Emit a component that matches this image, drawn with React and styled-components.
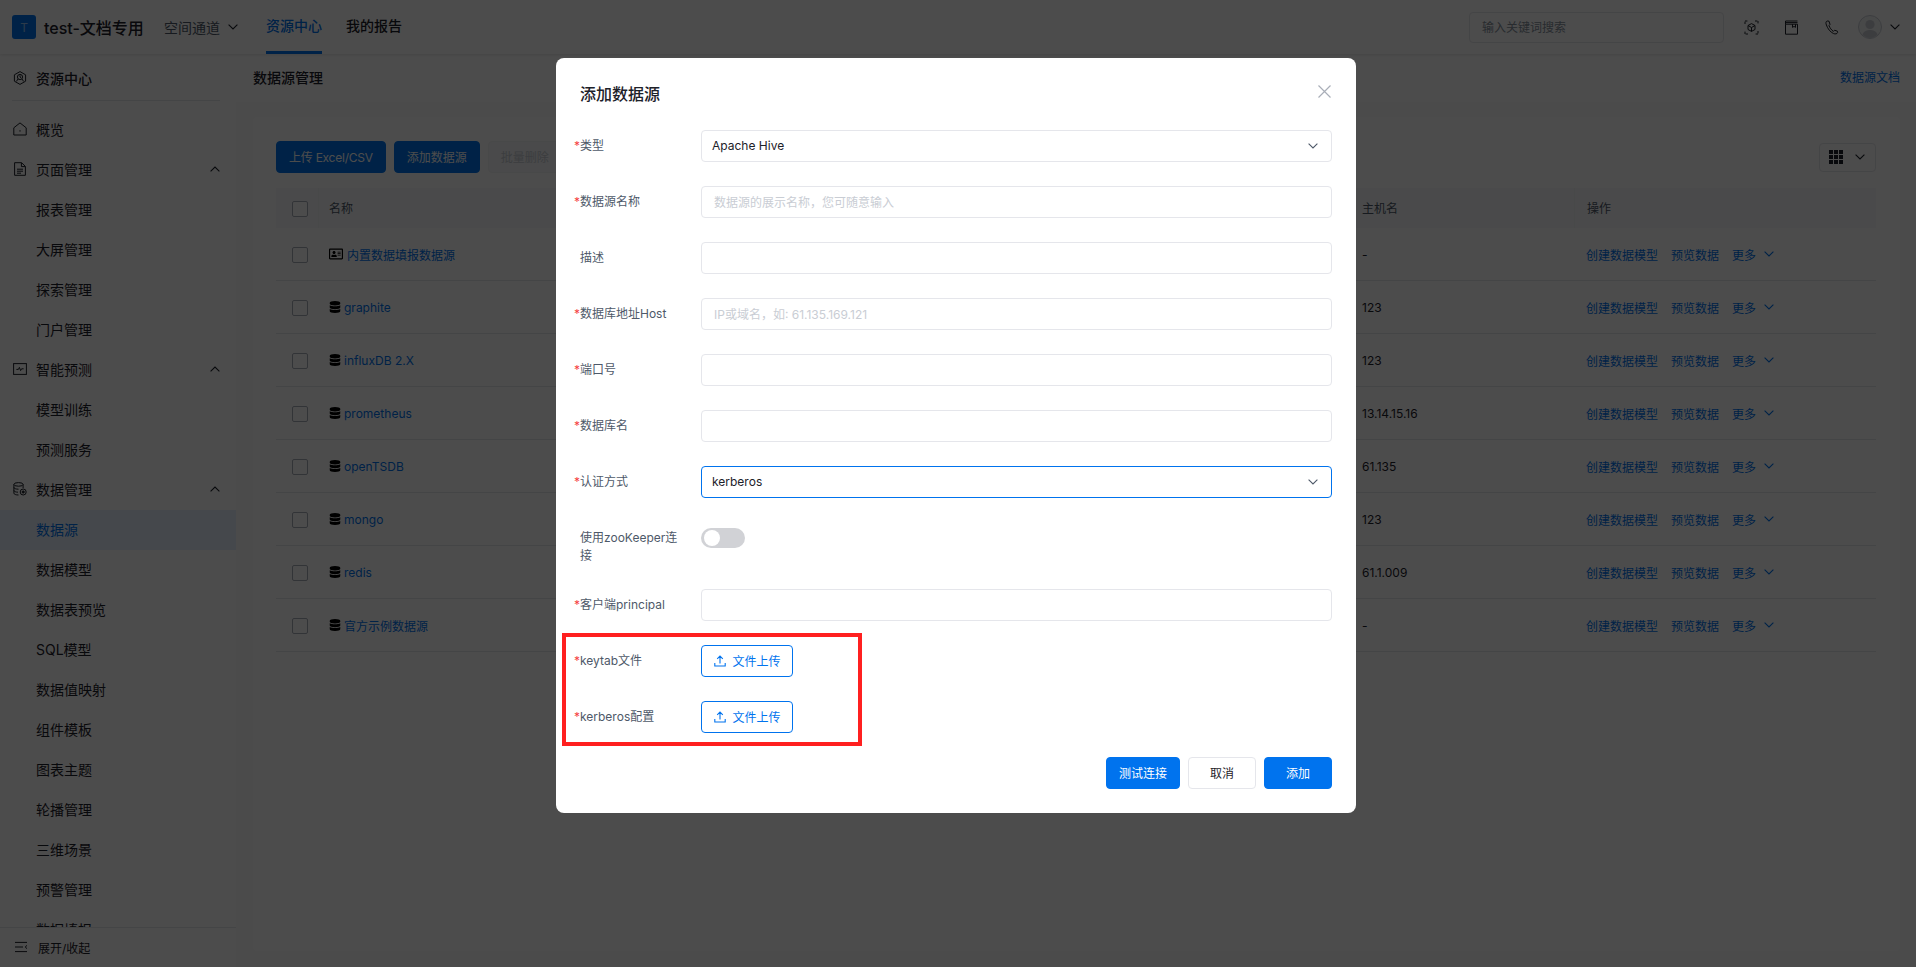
import React from 'react'
import styled, { createGlobalStyle } from 'styled-components'
import { FaDatabase, FaRegAddressCard } from 'react-icons/fa'

const GlobalStyle = createGlobalStyle`
html, body { margin: 0; height: 100%; }
body { font-family: Inter, "Noto Sans CJK SC", sans-serif; font-size: 12px; color: #1d2129; background: #fff; }
* { box-sizing: border-box; }
`

const Page = styled.div`
height: 100vh;
overflow: hidden;
display: flex;
flex-direction: column;
`

const TopBar = styled.header`
height: 54px;
flex: none;
display: flex;
align-items: center;
padding: 0 16px 0 12px;
background: #fff;
box-shadow: 0 1px 3px rgba(0,0,0,.1);
position: relative;
z-index: 1;
`
const LogoMark = styled.div`
width: 24px;
height: 24px;
border-radius: 3px;
background: #0073ee;
color: rgba(255,255,255,.6);
font-size: 12px;
display: flex;
align-items: center;
justify-content: center;
margin-right: 8px;
`
const Brand = styled.div`
font-size: 16px;
font-weight: 500;
width: 120px;
white-space: nowrap;
`
const Space = styled.div`
font-size: 14px;
color: #4e5969;
display: flex;
align-items: center;
gap: 8px;
width: 102px;
`
const Tab = styled.div`
height: 54px;
line-height: 52px;
font-size: 14px;
font-weight: 500;
margin-right: 24px;
color: ${({ $active }) => ($active ? '#0073ee' : '#1d2129')};
border-bottom: 3px solid ${({ $active }) => ($active ? '#0073ee' : 'transparent')};
`
const TopRight = styled.div`
margin-left: auto;
display: flex;
align-items: center;
`
const Search = styled.div`
width: 255px;
height: 31px;
border: 1px solid #e5e6eb;
border-radius: 4px;
padding: 0 12px;
line-height: 29px;
color: #86909c;
margin-right: 20px;
`
const TopIcon = styled.svg`
width: 15px;
height: 15px;
margin-right: ${({ $gap }) => $gap || 25}px;
fill: none;
stroke: #1d2129;
stroke-width: 1;
`
const Avatar = styled.svg`
width: 24px;
height: 24px;
margin-right: 8px;
`

const Body = styled.div`
flex: 1;
display: flex;
min-height: 0;
`
const Sidebar = styled.aside`
width: 236px;
flex: none;
display: flex;
flex-direction: column;
background: #fff;
box-shadow: 1px 0 2px rgba(0,0,0,.03);
`
const SideList = styled.nav`
flex: 1;
min-height: 0;
overflow: hidden;
`
const SideHead = styled.div`
height: 43px;
margin: 4px 16px 9px 12px;
border-bottom: 1px solid #e5e6eb;
display: flex;
align-items: center;
gap: 9px;
padding: 0 0 3px 1px;
font-size: 14px;
font-weight: 500;
color: #1d2129;
`
const SideItem = styled.div`
height: 40px;
display: flex;
align-items: center;
font-size: 14px;
gap: 9px;
padding: 0 16px 2px ${({ $sub }) => ($sub ? '36px' : '13px')};
color: ${({ $active }) => ($active ? '#0073ee' : '#1d2129')};
background: ${({ $active }) => ($active ? '#e8f2fd' : 'transparent')};
`
const SideIcon = styled.svg`
width: 14px;
height: 14px;
flex: none;
fill: none;
stroke: #1d2129;
stroke-width: 1;
`
const Caret = styled.svg`
width: ${({ $w }) => $w || 10}px;
height: ${({ $w }) => ($w ? $w * 0.6 : 6)}px;
flex: none;
fill: none;
stroke: ${({ $color }) => $color || '#1d2129'};
stroke-width: 1.1;
margin-left: ${({ $push }) => ($push ? 'auto' : 0)};
transform: ${({ $up }) => ($up ? 'rotate(180deg)' : 'none')};
`
const SideFoot = styled.div`
height: 40px;
flex: none;
border-top: 1px solid #e5e6eb;
display: flex;
align-items: center;
gap: 10px;
padding: 0 0 1px 14px;
font-size: 12px;
color: #1d2129;
`

const Main = styled.main`
flex: 1;
min-width: 0;
display: flex;
flex-direction: column;
background: #fafbfb;
`
const PageHead = styled.div`
height: 48px;
flex: none;
background: #fff;
display: flex;
align-items: center;
justify-content: space-between;
padding: 0 16px 3px 17px;
`
const PageTitle = styled.div`
font-size: 14px;
font-weight: 500;
`
const DocLink = styled.a`
color: #0073ee;
font-size: 12px;
`
const Content = styled.div`
flex: 1;
min-height: 0;
padding: 15px 16px 16px 17px;
display: flex;
`
const Card = styled.section`
flex: 1;
background: #fff;
border-radius: 4px;
padding: 24px 24px 24px 23px;
`
const Toolbar = styled.div`
display: flex;
align-items: center;
gap: 8px;
margin-bottom: 15px;
`
const Button = styled.button`
height: 32px;
padding: 0 12px 2px;
min-width: ${({ $min }) => $min || 0}px;
border-radius: 4px;
font: inherit;
font-size: 12px;
white-space: nowrap;
letter-spacing: ${({ $tight }) => ($tight ? '-0.25px' : 'normal')};
border: 1px solid ${({ $kind }) => ($kind === 'primary' ? '#0073ee' : $kind === 'ghost' ? '#f2f3f5' : '#e5e6eb')};
background: ${({ $kind }) => ($kind === 'primary' ? '#0073ee' : $kind === 'ghost' ? '#f7f8fa' : '#fff')};
color: ${({ $kind }) => ($kind === 'primary' ? '#fff' : $kind === 'ghost' ? '#c9cdd4' : '#1d2129')};
`
const ColumnPick = styled.div`
margin-left: auto;
width: 57px;
height: 29px;
border: 1px solid #e5e6eb;
border-radius: 4px;
display: flex;
align-items: center;
gap: 12px;
padding-left: 9px;
`
const GridDots = styled.div`
display: grid;
grid-template-columns: repeat(3, 4px);
grid-auto-rows: 4px;
gap: 1px;
span { background: #1d2129; }
`

const Row = styled.div`
display: grid;
grid-template-columns: 42px 1fr 224px 302px;
align-items: center;
height: ${({ $head }) => ($head ? '40px' : '53px')};
background: ${({ $head }) => ($head ? '#f7f8fa' : 'transparent')};
border-bottom: ${({ $head }) => ($head ? 'none' : '1px solid #e5e6eb')};
color: ${({ $head }) => ($head ? '#4e5969' : '#1d2129')};
`
const Check = styled.div`
width: 16px;
height: 16px;
margin: 1px 0 0 16px;
border: 1px solid #a9aeb8;
border-radius: 2px;
background: #fff;
`
const Cell = styled.div`
padding-left: ${({ $left }) => $left || 12}px;
padding-bottom: ${({ $head }) => ($head ? 2 : 0)}px;
display: flex;
align-items: center;
height: 100%;
white-space: nowrap;
border-left: ${({ $sep }) => ($sep ? '1px solid #f2f3f5' : 'none')};
`
const NameLink = styled.a`
color: #0073ee;
display: flex;
align-items: center;
gap: ${({ $wide }) => ($wide ? 4 : 3)}px;
svg { color: #000; flex: none; }
`
const Action = styled.a`
color: #0073ee;
margin-right: ${({ $near }) => ($near ? 8 : 13)}px;
`

const Overlay = styled.div`
position: fixed;
inset: 0;
background: rgba(0,0,0,.7);
display: flex;
justify-content: center;
align-items: flex-start;
padding: 58px 4px 0 0;
z-index: 5;
`
const Modal = styled.div`
position: relative;
width: 800px;
height: 755px;
background: #fff;
border-radius: 8px;
padding: 24px 24px 24px 17px;
`
const ModalTitle = styled.h2`
margin: 0 0 24px 7px;
font-size: 16px;
line-height: 24px;
font-weight: 500;
`
const Close = styled.svg`
position: absolute;
top: 27px;
right: 25px;
width: 13px;
height: 13px;
stroke: #a9aeb8;
stroke-width: 1.2;
fill: none;
`
const FormRow = styled.div`
display: flex;
align-items: flex-start;
margin-bottom: 24px;
`
const Label = styled.div`
width: 128px;
flex: none;
padding: 7px 19px 0 7px;
line-height: 18px;
color: #4e5969;
`
const Star = styled.span`
display: inline-block;
width: 6px;
margin-left: -6px;
color: #f53f3f;
`
const Field = styled.div`
flex: 1;
height: 32px;
border: 1px solid ${({ $focus }) => ($focus ? '#0073ee' : '#e5e6eb')};
border-radius: 4px;
padding: 0 ${({ $hint }) => ($hint ? 12 : 10)}px 2px;
display: flex;
align-items: center;
justify-content: space-between;
color: ${({ $hint }) => ($hint ? '#c9cdd4' : '#1d2129')};
svg { margin: 2px 3px 0 0; }
`
const Switch = styled.div`
width: 44px;
height: 20px;
margin-top: 6px;
padding: 2px 3px;
border-radius: 10px;
background: #d1d2d6;
`
const Knob = styled.div`
width: 16px;
height: 16px;
border-radius: 50%;
background: #fff;
`
const Upload = styled.button`
width: 92px;
height: 32px;
border: 1px solid #0073ee;
border-radius: 4px;
background: #fff;
color: #0073ee;
font: inherit;
font-size: 12px;
display: flex;
align-items: center;
justify-content: center;
gap: 6px;
padding: 0 0 2px 1px;
svg { width: 12px; height: 12px; margin-top: 2px; fill: none; stroke: #0073ee; stroke-width: 1.1; }
`
const Footer = styled.div`
display: flex;
justify-content: flex-end;
gap: 8px;
`
const RedBox = styled.div`
position: absolute;
left: 6px;
top: 575px;
width: 300px;
height: 113px;
border: 4px solid #ff2020;
pointer-events: none;
`

const ChevronPath = () => <path d="M.6 .6 5 5 9.4 .6" />
const Chevron = (props) => (
  <Caret viewBox="0 0 10 6" {...props}>
    <ChevronPath />
  </Caret>
)

const HexIcon = () => (
  <SideIcon viewBox="0 0 14 14">
    <path d="M7 .6 12.6 3.8V10.2L7 13.4 1.4 10.2V3.8Z" />
    <circle cx="7" cy="6" r="2.6" />
    <path d="M5 8 3.4 10.4M9 8 10.6 10.4M7 4.4V6L8.2 6.8" />
  </SideIcon>
)
const HomeIcon = () => (
  <SideIcon viewBox="0 0 14 14">
    <path d="M.8 13V5.8L7 .9 13.2 5.8V13Z" />
    <path d="M7 8.2V9.6" />
  </SideIcon>
)
const DocIcon = () => (
  <SideIcon viewBox="0 0 14 14">
    <path d="M1.6 .7H8.6L12.4 4.4V13.3H1.6Z" />
    <path d="M8.4 .9V4.6H12.2M4 7.2H10M4 9.2H10M4 11.2H8" />
  </SideIcon>
)
const ChartIcon = () => (
  <SideIcon viewBox="0 0 14 14">
    <rect x=".6" y="1.6" width="12.8" height="10.8" />
    <path d="M3.4 7.4H5.4L6.4 5.4 7.6 8.6 8.6 6.8H10.6" />
  </SideIcon>
)
const DataIcon = () => (
  <SideIcon viewBox="0 0 14 14">
    <ellipse cx="5.5" cy="2.4" rx="4.6" ry="1.8" />
    <path d="M.9 2.4V11.2C.9 12.3 3 13 5.5 13M.9 5.4C.9 6.5 3 7.2 5.5 7.2M.9 8.4C.9 9.5 3 10.2 5 10.2M10.1 2.4V6" />
    <circle cx="10.2" cy="10" r="3" />
    <circle cx="10.2" cy="10" r="1.1" fill="#1d2129" />
  </SideIcon>
)
const FoldIcon = () => (
  <SideIcon viewBox="0 0 14 14">
    <path d="M1 2.4H13M1 7H9M1 11.6H13M13 5.4 11.2 7 13 8.6" />
  </SideIcon>
)

const sideItems = [
  { label: '概览', icon: <HomeIcon /> },
  { label: '页面管理', icon: <DocIcon />, open: true },
  { label: '报表管理', sub: true },
  { label: '大屏管理', sub: true },
  { label: '探索管理', sub: true },
  { label: '门户管理', sub: true },
  { label: '智能预测', icon: <ChartIcon />, open: true },
  { label: '模型训练', sub: true },
  { label: '预测服务', sub: true },
  { label: '数据管理', icon: <DataIcon />, open: true },
  { label: '数据源', sub: true, active: true },
  { label: '数据模型', sub: true },
  { label: '数据表预览', sub: true },
  { label: 'SQL模型', sub: true },
  { label: '数据值映射', sub: true },
  { label: '组件模板', sub: true },
  { label: '图表主题', sub: true },
  { label: '轮播管理', sub: true },
  { label: '三维场景', sub: true },
  { label: '预警管理', sub: true },
  { label: '数据填报', sub: true },
]

const sources = [
  { name: '内置数据填报数据源', host: '-', card: true },
  { name: 'graphite', host: '123' },
  { name: 'influxDB 2.X', host: '123' },
  { name: 'prometheus', host: '13.14.15.16' },
  { name: 'openTSDB', host: '61.135' },
  { name: 'mongo', host: '123' },
  { name: 'redis', host: '61.1.009' },
  { name: '官方示例数据源', host: '-' },
]

const UploadIcon = () => (
  <svg viewBox="0 0 12 12">
    <path d="M.8 8V11H11.2V8M6 8.4V1.2M3.2 3.8 6 1 8.8 3.8" />
  </svg>
)

const App = () => {
  return (
    <Page>
      <GlobalStyle />
      <TopBar>
        <LogoMark>T</LogoMark>
        <Brand>test-文档专用</Brand>
        <Space>
          空间通道
          <Chevron />
        </Space>
        <Tab $active>资源中心</Tab>
        <Tab>我的报告</Tab>
        <TopRight>
          <Search>输入关键词搜索</Search>
          <TopIcon viewBox="0 0 15 15">
            <path d="M7.5 3.6 11 5.5V9.5L7.5 11.4 4 9.5V5.5ZM4 5.5 7.5 7.5 11 5.5M7.5 7.5V11.4" />
            <path d="M1 4V1H4M11 1H14V4M14 11V14H11M4 14H1V11" strokeDasharray="2.4 0.6" />
          </TopIcon>
          <TopIcon viewBox="0 0 15 15">
            <path d="M1.5 4.2H13.5V14.2H1.5ZM1.5 4.2V1H13.5M1.5 2.6H13.5M8.5 4.2V7.4L10 6.4 11.5 7.4V4.2" />
          </TopIcon>
          <TopIcon viewBox="0 0 15 15" $gap={19}>
            <path d="M3.2 1C1.8 1.5 1.6 3 2.4 5 3.6 8.6 6.4 12.2 9.6 13.6 11.4 14.2 13 14 13.6 12.6L13.4 11.2 10.6 10.2 9.4 11.4C7.4 10 5.8 7.8 5 5.6L6 4.4 5 1.2Z" />
          </TopIcon>
          <Avatar viewBox="0 0 24 24">
            <circle cx="12" cy="12" r="11.5" fill="#f2f3f5" stroke="#c9cdd4" />
            <circle cx="12" cy="9.5" r="4.6" fill="#c9cdd4" />
            <path d="M4.4 19.6C6 16 9 15 12 15S18 16 19.6 19.6C17.6 21.8 15 23 12 23S6.4 21.8 4.4 19.6Z" fill="#c9cdd4" />
          </Avatar>
          <Chevron />
        </TopRight>
      </TopBar>

      <Body>
        <Sidebar>
          <SideList>
            <SideHead>
              <HexIcon />
              资源中心
            </SideHead>
            {sideItems.map((item) => (
              <SideItem key={item.label} $sub={item.sub} $active={item.active}>
                {item.icon}
                {item.label}
                {item.open && <Chevron $push $up />}
              </SideItem>
            ))}
          </SideList>
          <SideFoot>
            <FoldIcon />
            展开/收起
          </SideFoot>
        </Sidebar>

        <Main>
          <PageHead>
            <PageTitle>数据源管理</PageTitle>
            <DocLink>数据源文档</DocLink>
          </PageHead>
          <Content>
            <Card>
              <Toolbar>
                <Button $kind="primary" $tight>上传 Excel/CSV</Button>
                <Button $kind="primary">添加数据源</Button>
                <Button $kind="ghost">批量删除</Button>
                <ColumnPick>
                  <GridDots>
                    {Array.from({ length: 9 }).map((_, i) => (
                      <span key={i} />
                    ))}
                  </GridDots>
                  <Chevron />
                </ColumnPick>
              </Toolbar>
              <Row $head>
                <Check />
                <Cell $head $left={10} $sep>名称</Cell>
                <Cell $head>主机名</Cell>
                <Cell $head $sep>操作</Cell>
              </Row>
              {sources.map((s) => (
                <Row key={s.name}>
                  <Check />
                  <Cell $left={11}>
                    <NameLink $wide={s.card}>
                      {s.card ? <FaRegAddressCard size={14} /> : <FaDatabase size={12} />}
                      {s.name}
                    </NameLink>
                  </Cell>
                  <Cell>{s.host}</Cell>
                  <Cell>
                    <Action>创建数据模型</Action>
                    <Action>预览数据</Action>
                    <Action $near>更多</Action>
                    <Chevron $color="#0073ee" />
                  </Cell>
                </Row>
              ))}
            </Card>
          </Content>
        </Main>
      </Body>

      <Overlay>
        <Modal>
          <ModalTitle>添加数据源</ModalTitle>
          <Close viewBox="0 0 13 13">
            <path d="M.5 .5 12.5 12.5M12.5 .5 .5 12.5" />
          </Close>
          <FormRow>
            <Label><Star>*</Star>类型</Label>
            <Field>Apache Hive<Chevron $color="#4e5969" /></Field>
          </FormRow>
          <FormRow>
            <Label><Star>*</Star>数据源名称</Label>
            <Field $hint>数据源的展示名称，您可随意输入</Field>
          </FormRow>
          <FormRow>
            <Label>描述</Label>
            <Field />
          </FormRow>
          <FormRow>
            <Label><Star>*</Star>数据库地址Host</Label>
            <Field $hint>IP或域名，如: 61.135.169.121</Field>
          </FormRow>
          <FormRow>
            <Label><Star>*</Star>端口号</Label>
            <Field />
          </FormRow>
          <FormRow>
            <Label><Star>*</Star>数据库名</Label>
            <Field />
          </FormRow>
          <FormRow>
            <Label><Star>*</Star>认证方式</Label>
            <Field $focus>kerberos<Chevron $color="#4e5969" /></Field>
          </FormRow>
          <FormRow>
            <Label>使用zooKeeper连接</Label>
            <Switch><Knob /></Switch>
          </FormRow>
          <FormRow>
            <Label><Star>*</Star>客户端principal</Label>
            <Field />
          </FormRow>
          <FormRow>
            <Label><Star>*</Star>keytab文件</Label>
            <Upload><UploadIcon />文件上传</Upload>
          </FormRow>
          <FormRow>
            <Label><Star>*</Star>kerberos配置</Label>
            <Upload><UploadIcon />文件上传</Upload>
          </FormRow>
          <Footer>
            <Button $kind="primary" $min={74}>测试连接</Button>
            <Button $min={68}>取消</Button>
            <Button $kind="primary" $min={68}>添加</Button>
          </Footer>
          <RedBox />
        </Modal>
      </Overlay>
    </Page>
  )
}

export default App
